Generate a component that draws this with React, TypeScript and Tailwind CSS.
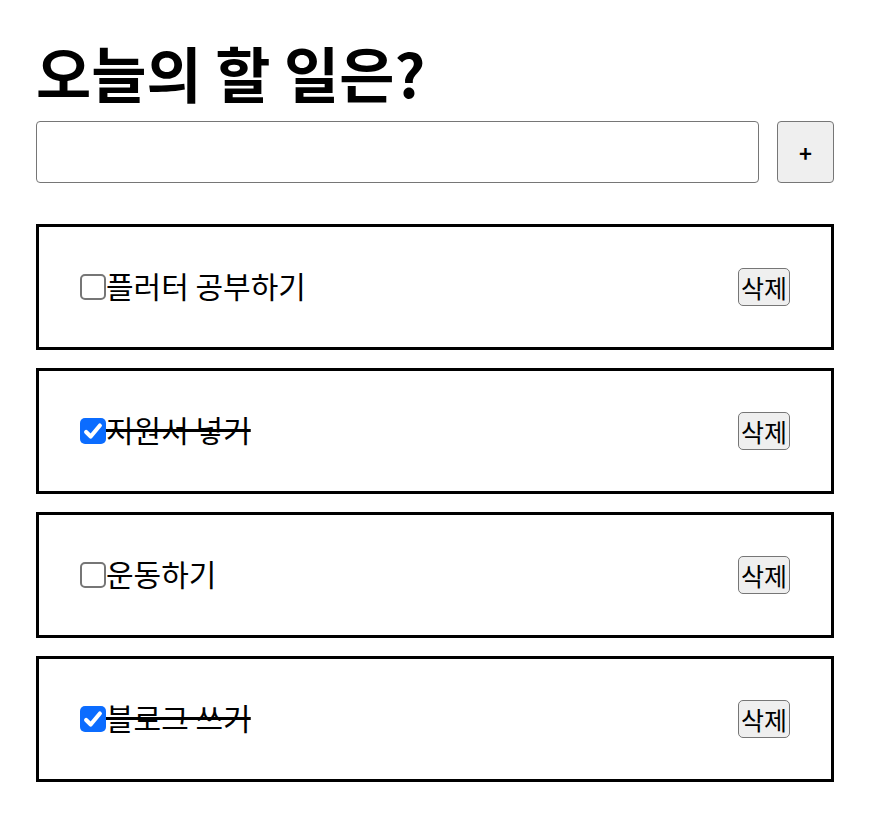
import { useState } from "react";

type Todo = { id: number; text: string; done: boolean };

const initialTodos: Todo[] = [
  { id: 1, text: "플러터 공부하기", done: false },
  { id: 2, text: "지원서 넣기", done: true },
  { id: 3, text: "운동하기", done: false },
  { id: 4, text: "블로그 쓰기", done: true },
];

const font = { fontFamily: '"Noto Sans CJK KR", "Noto Sans", sans-serif' };

function Check({ checked, onToggle }: { checked: boolean; onToggle: () => void }) {
  return (
    <button
      onClick={onToggle}
      className={`flex h-[26px] w-[26px] shrink-0 items-center justify-center rounded-[5px] ${
        checked ? "bg-[#0b6cff]" : "border-2 border-[#767676] bg-white"
      }`}
    >
      {checked && (
        <svg viewBox="0 0 24 24" className="h-[22px] w-[22px]" fill="none" stroke="white" strokeWidth="4.5" strokeLinecap="round" strokeLinejoin="round">
          <path d="M4.5 13 L9.5 18 L19.5 6" />
        </svg>
      )}
    </button>
  );
}

export default function App() {
  const [todos, setTodos] = useState<Todo[]>(initialTodos);
  const [input, setInput] = useState("");

  const addTodo = () => {
    if (!input.trim()) return;
    setTodos([...todos, { id: Date.now(), text: input, done: false }]);
    setInput("");
  };

  return (
    <div className="min-h-screen bg-white pl-9 pt-[30px] text-black" style={font}>
      <div className="w-[798px]">
        <h1 className="text-[60px] font-bold leading-[84px]">오늘의 할 일은?</h1>
        <div className="mt-[7px] flex gap-[18px]">
          <input
            value={input}
            onChange={(e) => setInput(e.target.value)}
            className="h-[62px] flex-1 rounded-[4px] border-[1.5px] border-[#767676] px-2 text-xl outline-none"
          />
          <button
            onClick={addTodo}
            className="h-[62px] w-[57px] rounded-[4px] border-[1.5px] border-[#767676] bg-[#efefef] text-[22px] font-semibold"
          >
            +
          </button>
        </div>

        <ul className="mt-[41px] flex flex-col gap-[18px]">
          {todos.map((t) => (
            <li key={t.id} className="flex h-[126px] items-center justify-between border-[3px] border-black px-[41px]">
              <div className="flex items-center">
                <Check
                  checked={t.done}
                  onToggle={() => setTodos(todos.map((x) => (x.id === t.id ? { ...x, done: !x.done } : x)))}
                />
                <span className={`-mt-[5px] text-[30px] leading-none ${t.done ? "line-through decoration-[3px]" : ""}`}>
                  {t.text}
                </span>
              </div>
              <button
                onClick={() => setTodos(todos.filter((x) => x.id !== t.id))}
                className="h-[38px] w-[52px] rounded-[5px] border-[1.5px] border-[#767676] bg-[#efefef] text-[25px] leading-none"
              >
                삭제
              </button>
            </li>
          ))}
        </ul>
      </div>
    </div>
  );
}
